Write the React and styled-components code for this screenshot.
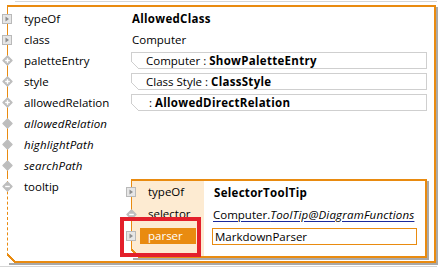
import styled, { createGlobalStyle } from "styled-components";

const ORANGE = "#e98b10";
const SHADOW = "#a9a9a9";
const RULE = "#d6d6d6";

const GlobalStyle = createGlobalStyle`
  body {
    margin: 0;
    background: #fff;
    font-family: "Open Sans", "Noto Sans", sans-serif;
    font-size: 11.5px;
    color: #000;
  }
  b {
    font-weight: 700;
    letter-spacing: 0.3px;
  }
  i {
    font-style: italic;
    letter-spacing: 0.2px;
  }
`;

const Page = styled.div`
  position: relative;
  width: 439px;
  height: 268px;
  overflow: hidden;
`;

const TopRule = styled.div`
  height: 1px;
  margin: 1px 2px 0 15px;
  background: ${RULE};
`;

const BottomRule = styled.div`
  height: 1px;
  margin: 3px 2px 0 0;
  background: ${RULE};
`;

const Panel = styled.div`
  position: relative;
  box-sizing: border-box;
  width: 429px;
  margin: 3px 0 0 7px;
  border: 2px solid ${ORANGE};
  border-left: none;
  box-shadow: 2px 2px 0 ${SHADOW};

  &::after {
    content: "";
    position: absolute;
    left: 0;
    bottom: -2px;
    width: 9px;
    height: 9px;
    background: linear-gradient(
      to top right,
      #fff 0 44%,
      ${ORANGE} 44% 58%,
      transparent 58%
    );
  }
`;

const Branch = styled.div`
  border-left: 1px ${(p) => (p.$dashed ? "dashed" : "solid")} ${ORANGE};
  padding-top: ${(p) => (p.$dashed ? 0 : 1)}px;
  padding-bottom: ${(p) => (p.$dashed ? 3 : 0)}px;
`;

const Row = styled.div`
  display: grid;
  grid-template-columns: 22px 107px 1fr;
  align-items: ${(p) => (p.$top ? "start" : "center")};
  height: ${(p) => (p.$top ? "auto" : "21px")};
  margin-left: -6px;
  padding-right: 7px;
`;

const IconCell = styled.span`
  display: flex;
  align-items: center;
  height: 21px;
`;

const Label = styled.span`
  line-height: 21px;
  font-style: ${(p) => (p.$italic ? "italic" : "normal")};
  letter-spacing: ${(p) => (p.$italic ? "0.15px" : "normal")};
  white-space: nowrap;
`;

const Value = styled.span`
  padding-left: 1px;
  white-space: nowrap;
`;

const RefBox = styled.div`
  position: relative;
  box-sizing: border-box;
  height: 17px;
  display: flex;
  align-items: center;
  padding-left: 14px;
  border: 1px solid #cfcfcf;
  white-space: nowrap;

  &::before {
    content: "";
    position: absolute;
    left: -1px;
    bottom: -1px;
    width: 8px;
    height: 8px;
    background: linear-gradient(
      to top right,
      #fff 0 44%,
      #cfcfcf 44% 56%,
      transparent 56%
    );
  }
`;

const Inner = styled.div`
  position: relative;
  box-sizing: border-box;
  margin: 3px 0 0;
  height: 79px;
  border: 2px solid ${ORANGE};
  border-left: 1px solid ${ORANGE};
  box-shadow: 2px 2px 0 ${SHADOW};
  background: linear-gradient(to right, #fdebd2 0 72px, #fff 72px);

  &::after {
    content: "";
    position: absolute;
    left: -1px;
    bottom: -2px;
    width: 9px;
    height: 9px;
    background: linear-gradient(
      to top right,
      #fff 0 44%,
      ${ORANGE} 44% 58%,
      transparent 58%
    );
  }
`;

const InnerRow = styled.div`
  display: grid;
  grid-template-columns: 22px 65px 1fr;
  align-items: center;
  height: 22px;
  margin-left: -6px;
  padding-right: 8px;
`;

const InnerLabel = styled.span`
  box-sizing: border-box;
  height: 16px;
  line-height: 16px;
  white-space: nowrap;
  ${(p) =>
    p.$selected &&
    `
    margin-left: -8px;
    width: 56px;
    padding-left: 8px;
    background: ${ORANGE};
    color: #fff;
  `}
`;

const LinkValue = styled.span`
  white-space: nowrap;
  text-decoration: underline;
  text-decoration-color: #1b2a9c;
  text-underline-offset: 2px;
`;

const InputBox = styled.div`
  box-sizing: border-box;
  height: 17px;
  line-height: 15px;
  padding-left: 2px;
  margin-left: -1px;
  border: 1px solid ${ORANGE};
`;

const Selection = styled.div`
  position: absolute;
  left: 120px;
  top: 217px;
  width: 81px;
  height: 40px;
  box-sizing: border-box;
  border: 4px solid #e3202b;
  pointer-events: none;
`;

function Expander() {
  return (
    <svg width="10" height="10" viewBox="0 0 10 10">
      <rect x="0.5" y="0.5" width="9" height="9" fill="#e6e6e6" stroke="#b9b9b9" />
      <path d="M3.5 2.5 L7 5 L3.5 7.5Z" fill="#8e8e8e" />
    </svg>
  );
}

function Node({ mark }) {
  return (
    <svg width="11" height="11" viewBox="0 0 11 11">
      <path
        d="M5.5 1 L10 5.5 L5.5 10 L1 5.5Z"
        fill="#bdbdbd"
        stroke="#bdbdbd"
        strokeWidth="1.4"
        strokeLinejoin="round"
      />
      {mark !== "none" && (
        <path d="M3.2 5.5h4.6" stroke="#fff" strokeWidth="1.4" />
      )}
      {mark === "plus" && <path d="M5.5 3.2v4.6" stroke="#fff" strokeWidth="1.4" />}
    </svg>
  );
}

const rows = [
  { icon: <Expander />, label: "typeOf", value: <Value><b>AllowedClass</b></Value> },
  { icon: <Expander />, label: "class", value: <Value>Computer</Value> },
  {
    icon: <Node mark="plus" />,
    label: "paletteEntry",
    value: (
      <RefBox>
        Computer&nbsp;:&nbsp;<b>ShowPaletteEntry</b>
      </RefBox>
    ),
  },
  {
    icon: <Node mark="plus" />,
    label: "style",
    value: (
      <RefBox>
        Class Style&nbsp;:&nbsp;<b>ClassStyle</b>
      </RefBox>
    ),
  },
  {
    icon: <Node mark="plus" />,
    label: "allowedRelation",
    value: (
      <RefBox>
        &nbsp;:&nbsp;<b>AllowedDirectRelation</b>
      </RefBox>
    ),
  },
  { icon: <Node mark="none" />, label: "allowedRelation", italic: true },
  { icon: <Node mark="none" />, label: "highlightPath", italic: true },
  { icon: <Node mark="none" />, label: "searchPath", italic: true },
];

export default function App() {
  return (
    <Page>
      <GlobalStyle />
      <TopRule />
      <Panel>
        <Branch>
          {rows.map((r, i) => (
            <Row key={i}>
              <IconCell>{r.icon}</IconCell>
              <Label $italic={r.italic}>{r.label}</Label>
              {r.value || <span />}
            </Row>
          ))}
        </Branch>
        <Branch $dashed>
          <Row $top>
            <IconCell>
              <Node mark="minus" />
            </IconCell>
            <Label>tooltip</Label>
            <Inner>
              <InnerRow>
                <IconCell>
                  <Expander />
                </IconCell>
                <InnerLabel>typeOf</InnerLabel>
                <Value>
                  <b>SelectorToolTip</b>
                </Value>
              </InnerRow>
              <InnerRow>
                <IconCell>
                  <Node mark="minus" />
                </IconCell>
                <InnerLabel>selector</InnerLabel>
                <LinkValue>
                  Computer.<i>ToolTip@DiagramFunctions</i>
                </LinkValue>
              </InnerRow>
              <InnerRow>
                <IconCell>
                  <Expander />
                </IconCell>
                <InnerLabel $selected>parser</InnerLabel>
                <InputBox>MarkdownParser</InputBox>
              </InnerRow>
            </Inner>
          </Row>
        </Branch>
      </Panel>
      <BottomRule />
      <Selection />
    </Page>
  );
}
